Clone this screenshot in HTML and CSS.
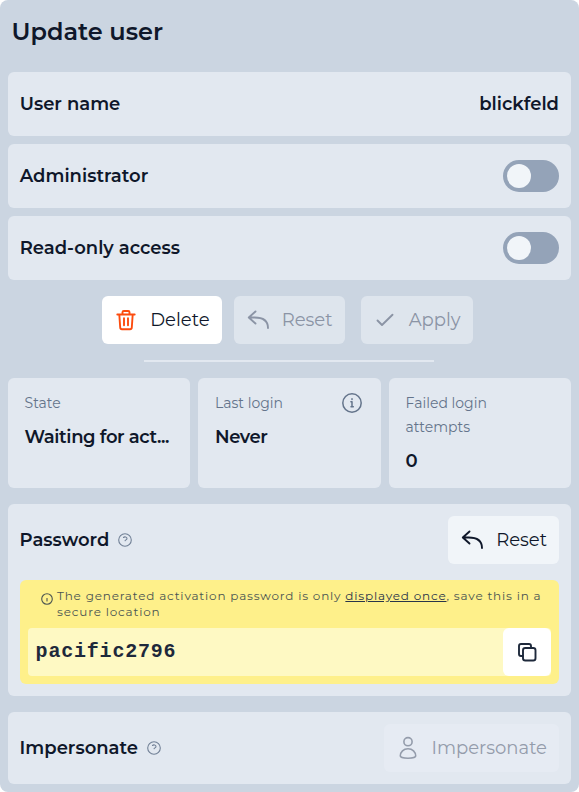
FILE: index.html
```
<!DOCTYPE html>
<html lang="en">
<head>
<meta charset="utf-8">
<title>Update user</title>
<link rel="stylesheet" href="styles.css">
</head>
<body>
<svg class="defs" aria-hidden="true">
  <symbol id="undo" viewBox="0 0 24 24"><path d="M9.500 4 2.800 10l6.700 6M3 10h5.500c8 0 13.500 3 13.500 10.500" transform="translate(0 -.5)"/></symbol>
  <symbol id="help" viewBox="0 0 14 14"><circle cx="7" cy="7" r="6.300"/><path d="M5.500 4.500c1-1 3.500-.7 3.500 1 0 1.300-1.500 1.300-1.900 2.200"/></symbol>
</svg>
<main class="panel">
  <h1 class="title">Update user</h1>
  <section class="fields">
    <div class="card row"><span class="label">User name</span><span class="label">blickfeld</span></div>
    <div class="card row"><span class="label">Administrator</span><span class="toggle"></span></div>
    <div class="card row"><span class="label">Read-only access</span><span class="toggle"></span></div>
  </section>
  <div class="actions">
    <button class="btn delete"><svg class="icon danger" viewBox="0 0 24 24"><path d="M3.300 6.500h17.400M5.300 6.500l.9 13q.1 1.700 1.800 1.700h8q1.700 0 1.800-1.700l.9-13M8.500 6V4.300q0-1.300 1.300-1.300h4.400q1.300 0 1.300 1.300V6M10 10.200v7M14 10.200v7"/></svg><span>Delete</span></button>
    <button class="btn reset off"><svg class="icon"><use href="#undo"/></svg><span>Reset</span></button>
    <button class="btn apply off"><svg class="icon" viewBox="0 0 24 24"><path d="m4.500 12.500 4.500 4.500L19.500 6.700"/></svg><span>Apply</span></button>
  </div>
  <hr class="rule">
  <section class="stats">
    <div class="card stat"><span class="caption">State</span><strong class="label">Waiting for act...</strong></div>
    <div class="card stat login"><div class="stat-head"><span class="caption">Last login</span><svg class="info" viewBox="0 0 20 20"><circle cx="10" cy="10" r="9.200"/><path d="M8.900 8.700H10v5M9 13.800h2.300M10 5.800v.7"/></svg></div><strong class="label">Never</strong></div>
    <div class="card stat"><span class="caption">Failed login<br>attempts</span><strong class="label">0</strong></div>
  </section>
  <section class="card password">
    <div class="head"><span class="label">Password</span><svg class="help"><use href="#help"/></svg><button class="btn reset plain"><svg class="icon"><use href="#undo"/></svg><span>Reset</span></button></div>
    <div class="notice">
      <div class="message"><svg class="note-icon" viewBox="0 0 12 12"><circle cx="6" cy="6" r="5.300"/><path d="M6 5.500v2.400"/></svg><p>The generated activation password is only <u>displayed once</u>, save this in a<br>secure location</p></div>
      <div class="secret"><code>pacific2796</code><button class="copy"><svg class="icon" viewBox="0 0 24 24"><rect x="8" y="8" width="12.500" height="12.500" rx="2.300"/><path d="M7.500 16H6q-2 0-2-2V6q0-2 2-2h8q2 0 2 2v1.500"/></svg></button></div>
    </div>
  </section>
  <section class="card imp head"><span class="label">Impersonate</span><svg class="help"><use href="#help"/></svg><button class="btn impersonate"><svg class="icon" viewBox="0 0 24 24"><circle cx="12" cy="5.700" r="4.100"/><path d="M12 12.800c-4.500 0-7.700 3.200-7.700 7.300 0 1.100 3 2.100 7.700 2.100s7.700-1 7.700-2.100c0-4.100-3.200-7.300-7.700-7.300Z"/></svg><span>Impersonate</span></button></section>
</main>
</body>
</html>
```
FILE: styles.css
```
* { box-sizing: border-box; }
body { margin: 0; background: #fff; font-family: Montserrat, Inter, sans-serif; color: #0f172a; }
.defs { display: none; }
.panel { height: 792px; padding: 0 8px 8px; background: #cbd5e1; border-radius: 8px; }
.title { height: 64px; margin: 0 0 8px; padding-left: 3.600px; font-size: 24px; line-height: 64px; font-weight: 600; }
.card { background: #e2e8f0; border-radius: 6px; }
.fields { display: grid; gap: 8px; }
.row { display: flex; height: 64px; padding: 0 12px 0 11.700px; align-items: center; justify-content: space-between; }
.label { font-size: 18px; line-height: 28px; font-weight: 600; white-space: nowrap; }
.toggle { width: 56px; height: 32px; padding: 4px; border-radius: 16px; background: #94a3b8; }
.toggle::before { content: ""; display: block; width: 24px; height: 24px; border-radius: 50%; background: #f1f5f9; }
.actions { display: flex; margin: 16px 0 16px 94px; }
.btn { display: flex; height: 48px; padding: 0 12px; align-items: center; justify-content: space-between; border: 0; border-radius: 6px; font: 400 18px/28px Montserrat, Inter, sans-serif; color: #0f172a; white-space: nowrap; }
.icon, .help, .info, .note-icon { flex: none; fill: none; stroke: currentColor; stroke-width: 1.9; stroke-linecap: round; stroke-linejoin: round; }
.icon { width: 24px; height: 24px; }
.danger { color: #fc4c0f; }
.delete { width: 120px; background: #fff; }
.reset { width: 111px; }
.actions .btn { padding-right: 12.500px; }
.actions .reset { margin: 0 16px 0 12px; }
.apply { width: 112px; }
.off { color: #8b94a5; background: #dee5ed; }
.rule { width: 290px; height: 2px; margin: 0 0 16px 136px; border: 0; background: #e2e8f0; }
.stats { display: grid; grid-template-columns: 182px 183px 182px; gap: 8px; height: 110px; }
.stat { display: flex; flex-direction: column; gap: 8px; padding: 13px 16.600px; }
.login { padding-left: 17px; }
.stat .label { letter-spacing: -.4px; }
.stat-head { display: flex; align-items: center; justify-content: space-between; }
.caption { font-size: 14px; line-height: 24px; font-weight: 400; color: #64748b; }
.info { width: 20px; height: 20px; margin-right: 2px; color: #64748b; stroke-width: 1.5; }
.password { height: 192px; margin-top: 16px; padding: 12px; }
.head { display: flex; align-items: center; }
.head .label { margin-left: -.4px; }
.help { width: 14px; height: 14px; margin-left: 9px; color: #718096; stroke-width: 1.1; }
.head .btn { margin-left: auto; }
.plain { background: #f1f5f9; }
.notice { height: 104px; margin-top: 16px; padding: 8px; border-radius: 6px; background: #fef08a; }
.message { display: flex; height: 40px; padding-left: 13px; font-size: 12px; line-height: 16px; letter-spacing: .81px; color: #4b5552; white-space: nowrap; }
.message p { margin: 0; }
.message u { color: #293549; text-underline-offset: 1px; }
.note-icon { width: 12px; height: 12px; margin: 5px 4px 0 0; stroke-width: 1.1; }
.secret { display: flex; height: 48px; justify-content: space-between; align-items: center; border-radius: 4px; background: #fef9c3; }
.secret code { padding-left: 7.600px; font: 700 20px/28px "Liberation Mono", monospace; letter-spacing: .8px; color: #1e293b; }
.copy { display: flex; width: 48px; height: 48px; padding: 0; align-items: center; justify-content: center; border: 0; border-radius: 6px; background: #fff; color: #1e293b; }
.imp { height: 72px; margin-top: 16px; padding: 12px; }
.impersonate { width: 175px; color: #949cab; background: #e6ebf3; }
.impersonate .icon { stroke-width: 1.6; }
```
